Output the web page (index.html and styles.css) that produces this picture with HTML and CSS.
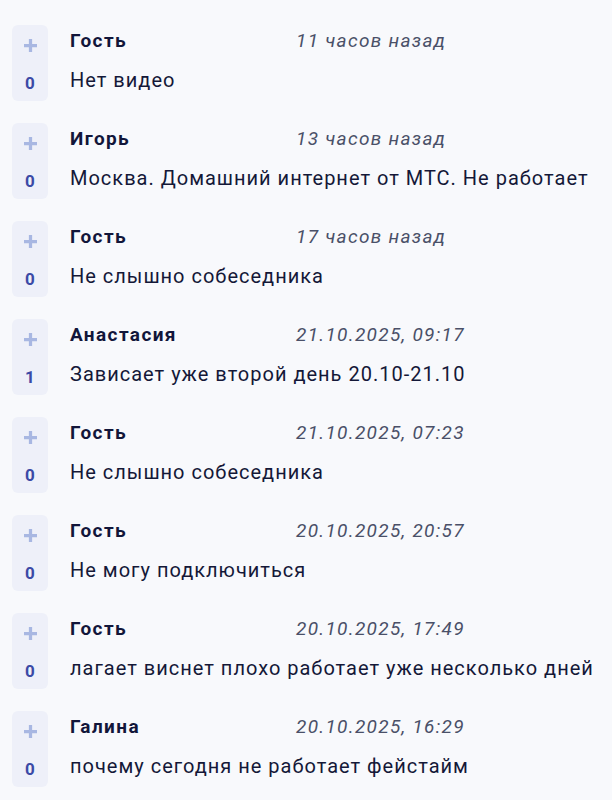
FILE: index.html
```
<!DOCTYPE html>
<html lang="ru">
<head>
    <meta charset="UTF-8">
    <meta name="viewport" content="width=device-width, initial-scale=1.0">
    <title>Комментарии</title>
    <link rel="stylesheet" href="styles.css">
</head>
<body>
    <div class="comments">
        <div class="comment">
            <div class="vote">
                <svg class="plus" viewBox="0 0 12 12"><path d="M4.5 0h3v4.5H12v3H7.5V12h-3V7.5H0v-3h4.5z"/></svg>
                <span class="score">0</span>
            </div>
            <div class="body">
                <div class="head"><span class="name">Гость</span><span class="time">11 часов назад</span></div>
                <p class="text">Нет видео</p>
            </div>
        </div>
        <div class="comment">
            <div class="vote">
                <svg class="plus" viewBox="0 0 12 12"><path d="M4.5 0h3v4.5H12v3H7.5V12h-3V7.5H0v-3h4.5z"/></svg>
                <span class="score">0</span>
            </div>
            <div class="body">
                <div class="head"><span class="name">Игорь</span><span class="time">13 часов назад</span></div>
                <p class="text">Москва. Домашний интернет от МТС. Не работает</p>
            </div>
        </div>
        <div class="comment">
            <div class="vote">
                <svg class="plus" viewBox="0 0 12 12"><path d="M4.5 0h3v4.5H12v3H7.5V12h-3V7.5H0v-3h4.5z"/></svg>
                <span class="score">0</span>
            </div>
            <div class="body">
                <div class="head"><span class="name">Гость</span><span class="time">17 часов назад</span></div>
                <p class="text">Не слышно собеседника</p>
            </div>
        </div>
        <div class="comment">
            <div class="vote">
                <svg class="plus" viewBox="0 0 12 12"><path d="M4.5 0h3v4.5H12v3H7.5V12h-3V7.5H0v-3h4.5z"/></svg>
                <span class="score">1</span>
            </div>
            <div class="body">
                <div class="head"><span class="name">Анастасия</span><span class="time">21.10.2025, 09:17</span></div>
                <p class="text">Зависает уже второй день 20.10-21.10</p>
            </div>
        </div>
        <div class="comment">
            <div class="vote">
                <svg class="plus" viewBox="0 0 12 12"><path d="M4.5 0h3v4.5H12v3H7.5V12h-3V7.5H0v-3h4.5z"/></svg>
                <span class="score">0</span>
            </div>
            <div class="body">
                <div class="head"><span class="name">Гость</span><span class="time">21.10.2025, 07:23</span></div>
                <p class="text">Не слышно собеседника</p>
            </div>
        </div>
        <div class="comment">
            <div class="vote">
                <svg class="plus" viewBox="0 0 12 12"><path d="M4.5 0h3v4.5H12v3H7.5V12h-3V7.5H0v-3h4.5z"/></svg>
                <span class="score">0</span>
            </div>
            <div class="body">
                <div class="head"><span class="name">Гость</span><span class="time">20.10.2025, 20:57</span></div>
                <p class="text">Не могу подключиться</p>
            </div>
        </div>
        <div class="comment">
            <div class="vote">
                <svg class="plus" viewBox="0 0 12 12"><path d="M4.5 0h3v4.5H12v3H7.5V12h-3V7.5H0v-3h4.5z"/></svg>
                <span class="score">0</span>
            </div>
            <div class="body">
                <div class="head"><span class="name">Гость</span><span class="time">20.10.2025, 17:49</span></div>
                <p class="text">лагает виснет плохо работает уже несколько дней</p>
            </div>
        </div>
        <div class="comment">
            <div class="vote">
                <svg class="plus" viewBox="0 0 12 12"><path d="M4.5 0h3v4.5H12v3H7.5V12h-3V7.5H0v-3h4.5z"/></svg>
                <span class="score">0</span>
            </div>
            <div class="body">
                <div class="head"><span class="name">Галина</span><span class="time">20.10.2025, 16:29</span></div>
                <p class="text">почему сегодня не работает фейстайм</p>
            </div>
        </div>
    </div>
</body>
</html>
```

FILE: styles.css
```
/* Page */
body {
    margin: 0;
    background: #f8f9fc;
    font-family: Roboto, "Liberation Sans", sans-serif;
    color: #141838;
}
.comments {
    display: flex;
    flex-direction: column;
    gap: 22px;
    padding: 25px 0 0 12px;
}
/* One comment */
.comment {
    display: flex;
    gap: 22px;
}
/* Vote box */
.vote {
    width: 36px;
    height: 76px;
    flex-shrink: 0;
    box-sizing: border-box;
    padding: 14px 0 6px;
    border-radius: 6px;
    background: #eef0f9;
    display: flex;
    flex-direction: column;
    align-items: center;
    justify-content: space-between;
}
.plus {
    width: 13px;
    height: 13px;
    fill: #a8b7e2;
}
.score {
    font-size: 17px;
    font-weight: 700;
    line-height: 24px;
    color: #3b4aa6;
}
/* Text */
.head {
    display: flex;
    margin-top: 4px;
    line-height: 24px;
}
.name {
    width: 226px;
    font-size: 19px;
    font-weight: 700;
    letter-spacing: 1.4px;
    color: #12163a;
}
.time {
    font-size: 19px;
    font-style: italic;
    letter-spacing: 1.3px;
    color: #4a5068;
}
.text {
    margin: 15px 0 0;
    font-size: 20px;
    line-height: 24px;
    letter-spacing: 1px;
}
```
